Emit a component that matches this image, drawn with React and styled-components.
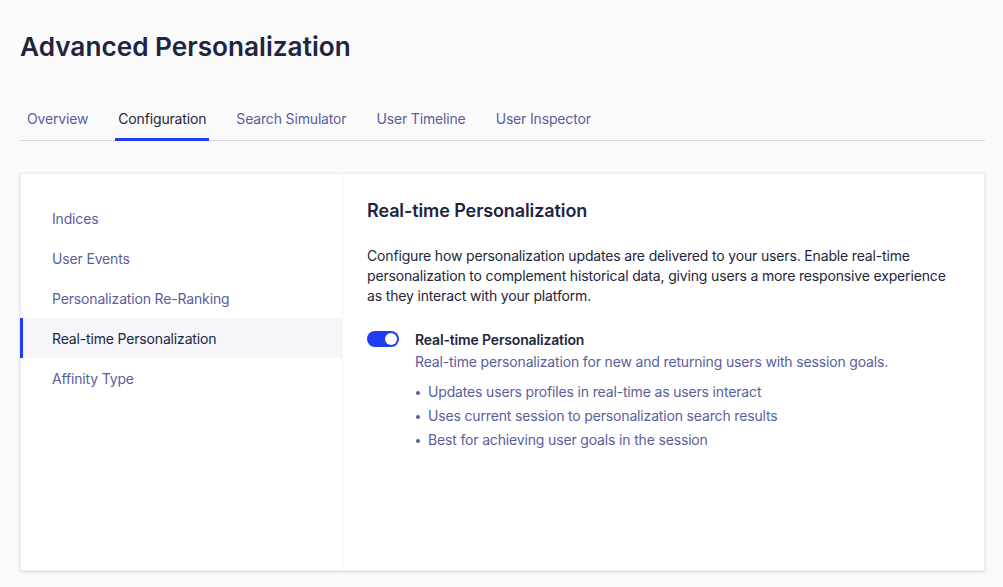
import React, { useState } from "react";
import styled, { createGlobalStyle } from "styled-components";

const GlobalStyle = createGlobalStyle`
  html, body {
    margin: 0;
    padding: 0;
    background: #fafafb;
    font-family: Inter, "Noto Sans", "Liberation Sans", sans-serif;
    -webkit-font-smoothing: antialiased;
  }
  * { box-sizing: border-box; }
`;

const Page = styled.div`
  padding: 31px 18px 16px 20px;
  min-height: 587px;
`;

const Title = styled.h1`
  margin: 0;
  font-size: 26.2px;
  line-height: 32px;
  font-weight: 600;
  color: #21243d;
`;

const TabBar = styled.nav`
  display: flex;
  gap: 16px;
  margin-top: 38px;
  border-bottom: 1px solid #d6d6e7;
  height: 40px;
`;

const Tab = styled.button`
  position: relative;
  border: 0;
  background: none;
  padding: 0 7px 5px;
  height: 40px;
  font: inherit;
  font-size: 14px;
  line-height: 16px;
  letter-spacing: -0.16px;
  color: ${(p) => (p.$active ? "#23263b" : "#5a5e9a")};
  cursor: pointer;
  display: flex;
  align-items: center;

  &::after {
    content: "";
    position: absolute;
    left: 4px;
    right: 4px;
    bottom: 0;
    height: 3px;
    background: ${(p) => (p.$active ? "#1e3df5" : "transparent")};
  }
`;

const Card = styled.section`
  margin-top: 32px;
  display: flex;
  height: 398px;
  background: #fff;
  border: 1px solid #ececf2;
  box-shadow: 0 1px 3px rgba(35, 38, 59, 0.14);
`;

const Sidebar = styled.aside`
  width: 322px;
  flex-shrink: 0;
  padding-top: 24px;
  border-right: 1px solid #f4f4f8;
  display: flex;
  flex-direction: column;
`;

const SideItem = styled.a`
  display: flex;
  align-items: center;
  height: 40px;
  padding-left: ${(p) => (p.$active ? "29px" : "32px")};
  font-size: 14px;
  letter-spacing: -0.16px;
  color: ${(p) => (p.$active ? "#23263b" : "#5a5e9a")};
  background: ${(p) => (p.$active ? "#f5f5fa" : "transparent")};
  border-left: ${(p) => (p.$active ? "3px solid #1e3df5" : "0")};
  cursor: pointer;
  margin-left: -1px;
`;

const Content = styled.div`
  flex: 1;
  padding: 25px 22px 24px 24px;
  letter-spacing: -0.16px;
`;

const Heading = styled.h2`
  margin: 0;
  font-size: 18px;
  line-height: 24px;
  font-weight: 600;
  letter-spacing: -0.1px;
  color: #21243d;
`;

const Intro = styled.p`
  margin: 23px 0 0;
  font-size: 14px;
  line-height: 20px;
  color: #23263b;
  max-width: 594px;
`;

const Option = styled.div`
  display: flex;
  gap: 16px;
  margin-top: 24px;
`;

const Switch = styled.button`
  position: relative;
  flex-shrink: 0;
  width: 32px;
  height: 16px;
  margin-top: 1px;
  border: 0;
  border-radius: 8px;
  padding: 0;
  background: ${(p) => (p.$on ? "#1e3df5" : "#d6d6e7")};
  cursor: pointer;

  &::after {
    content: "";
    position: absolute;
    top: 2px;
    left: ${(p) => (p.$on ? "18px" : "2px")};
    width: 12px;
    height: 12px;
    border-radius: 50%;
    background: #fff;
  }
`;

const OptionBody = styled.div`
  display: flex;
  flex-direction: column;
`;

const OptionLabel = styled.div`
  font-size: 14px;
  line-height: 20px;
  font-weight: 600;
  color: #23263b;
`;

const OptionHint = styled.div`
  margin-top: 2px;
  font-size: 14px;
  line-height: 20px;
  color: #5a5e9a;
`;

const Bullets = styled.ul`
  list-style: none;
  margin: 8px 0 0;
  padding: 0;
`;

const Bullet = styled.li`
  position: relative;
  padding-left: 13px;
  font-size: 14px;
  line-height: 24px;
  color: #5a5e9a;

  &::before {
    content: "";
    position: absolute;
    left: 1px;
    top: 11px;
    width: 4px;
    height: 4px;
    border-radius: 50%;
    background: #5a5e9a;
  }
`;

const tabs = ["Overview", "Configuration", "Search Simulator", "User Timeline", "User Inspector"];
const sections = [
  "Indices",
  "User Events",
  "Personalization Re-Ranking",
  "Real-time Personalization",
  "Affinity Type",
];
const points = [
  "Updates users profiles in real-time as users interact",
  "Uses current session to personalization search results",
  "Best for achieving user goals in the session",
];

export default function App() {
  const [enabled, setEnabled] = useState(true);
  return (
    <>
      <GlobalStyle />
      <Page>
        <Title>Advanced Personalization</Title>
        <TabBar>
          {tabs.map((t) => (
            <Tab key={t} $active={t === "Configuration"}>
              {t}
            </Tab>
          ))}
        </TabBar>
        <Card>
          <Sidebar>
            {sections.map((s) => (
              <SideItem key={s} $active={s === "Real-time Personalization"}>
                {s}
              </SideItem>
            ))}
          </Sidebar>
          <Content>
            <Heading>Real-time Personalization</Heading>
            <Intro>
              Configure how personalization updates are delivered to your users. Enable real-time
              personalization to complement historical data, giving users a more responsive
              experience as they interact with your platform.
            </Intro>
            <Option>
              <Switch
                $on={enabled}
                aria-pressed={enabled}
                onClick={() => setEnabled((v) => !v)}
              />
              <OptionBody>
                <OptionLabel>Real-time Personalization</OptionLabel>
                <OptionHint>
                  Real-time personalization for new and returning users with session goals.
                </OptionHint>
                <Bullets>
                  {points.map((p) => (
                    <Bullet key={p}>{p}</Bullet>
                  ))}
                </Bullets>
              </OptionBody>
            </Option>
          </Content>
        </Card>
      </Page>
    </>
  );
}
